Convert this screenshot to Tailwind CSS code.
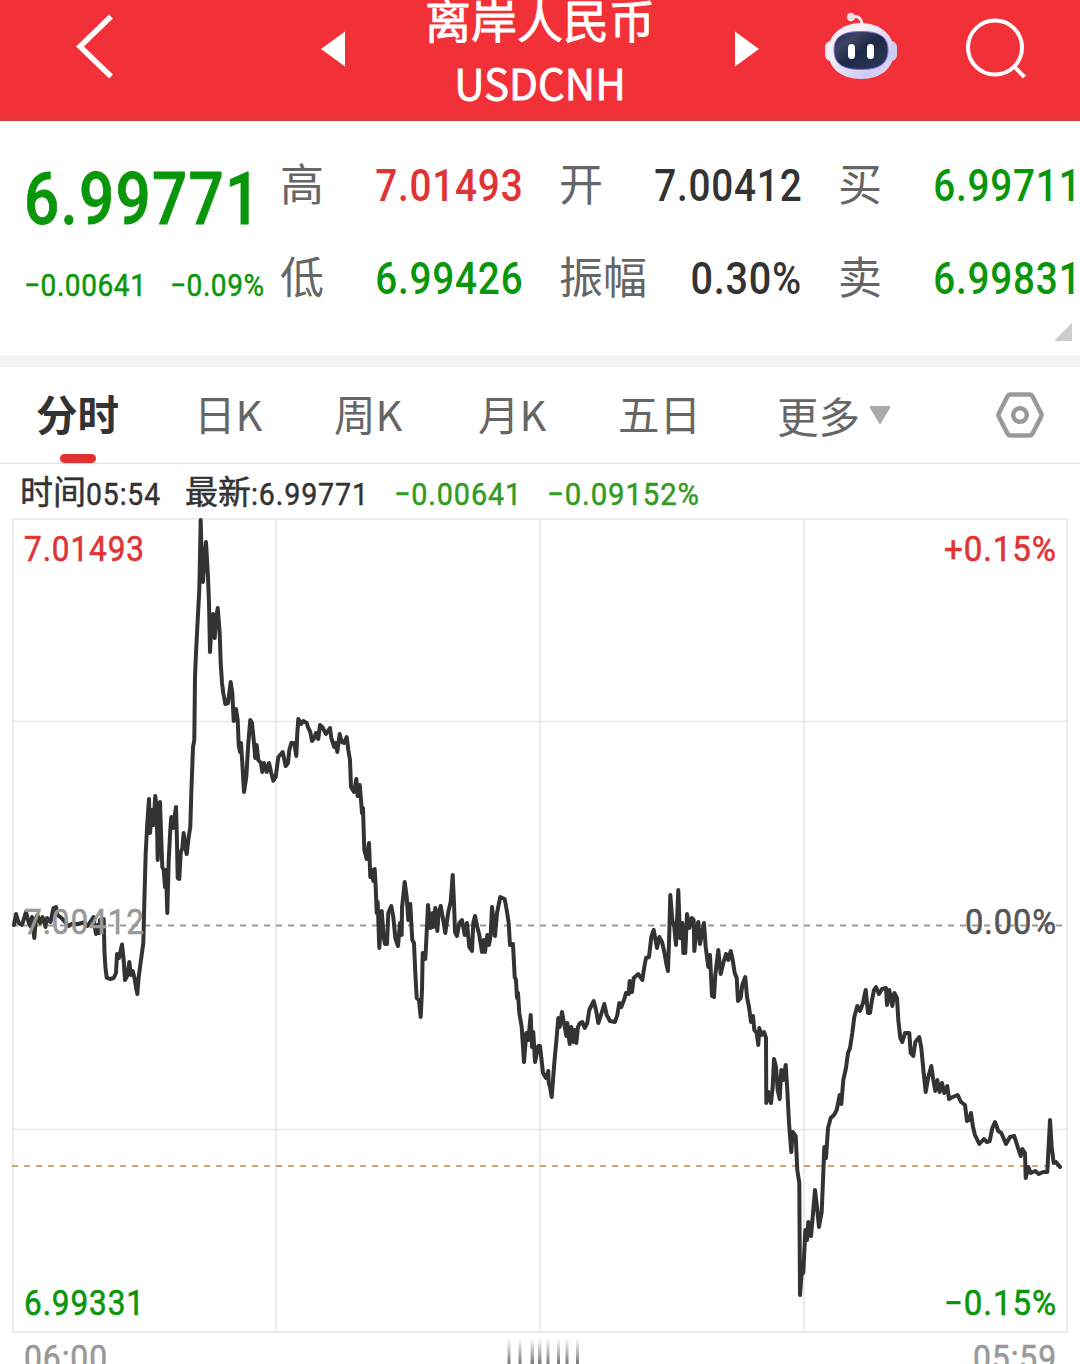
<!DOCTYPE html>
<html lang="zh-CN">
<head>
    <meta charset="UTF-8">
    <meta name="viewport" content="width=device-width, initial-scale=1.0">
    <title>离岸人民币 USDCNH</title>
    <script src="https://cdn.jsdelivr.net/npm/@tailwindcss/browser@4"></script>
</head>
<body class="bg-white w-[1080px] h-[1364px] overflow-hidden font-['Noto_Sans_CJK_SC',sans-serif] text-[#333]">

    <!-- Header -->
    <header class="relative flex h-[121px] bg-[#f23037] border-b-[5px] border-[#e83538] text-white">
        <svg class="w-[320px] h-[121px] shrink-0" viewBox="0 0 320 121" fill="none" stroke="#fff" stroke-width="5.5">
            <path d="M111 16.5 80 46.5l31 30" />
        </svg>
        <svg class="w-[26px] h-[121px] shrink-0" viewBox="320 0 26 121" fill="#fff">
            <path d="M321 49l24-17.500v35z" />
        </svg>
        <div class="w-[388px] shrink-0 flex flex-col items-center -mt-[5px] [-webkit-text-stroke:0.8px_#fff]">
            <h1 class="text-[46px] leading-[46px]">离岸人民币</h1>
            <div class="text-[42px] leading-[42px] mt-[20px]">USDCNH</div>
        </div>
        <svg class="w-[26px] h-[121px] shrink-0" viewBox="734 0 26 121" fill="#fff">
            <path d="M759 49l-24-17.500v35z" />
        </svg>
        <!-- Robot assistant -->
        <svg class="w-[180px] h-[121px] shrink-0" viewBox="760 0 180 121">
            <defs>
                <linearGradient id="head" x1="0" y1="0" x2="1" y2="1">
                    <stop offset="0.300" stop-color="#f8f1f8" />
                    <stop offset="0.750" stop-color="#cdcbf5" />
                    <stop offset="1" stop-color="#e9dcf3" />
                </linearGradient>
                <linearGradient id="visor" x1="0" y1="0" x2="1" y2="1">
                    <stop offset="0" stop-color="#252c55" />
                    <stop offset="0.250" stop-color="#3b4463" />
                    <stop offset="0.500" stop-color="#1f2947" />
                    <stop offset="1" stop-color="#2d3858" />
                </linearGradient>
            </defs>
            <path d="M851 17c6-1.500 10 0 11 7" fill="none" stroke="#f3e4ee" stroke-width="3" />
            <circle cx="851" cy="17" r="4.200" fill="#f1dfe8" />
            <rect x="825" y="41" width="12" height="20" rx="6" fill="#ece6f8" />
            <rect x="885" y="41" width="12" height="20" rx="6" fill="#cfcdf3" />
            <path d="M861 23c19 0 33 12 33 28 0 17-13 28-33 28s-33-11-33-28c0-16 14-28 33-28z" fill="url(#head)" />
            <path d="M861 31.500c18 0 27 5 27 18.500 0 14-9 19.500-27 19.500s-27-5.500-27-19.500c0-13.500 9-18.500 27-18.500z" fill="url(#visor)" stroke="#7d72dc" stroke-width="1" />
            <rect x="848" y="44" width="7" height="15" rx="3.500" fill="#fff" />
            <rect x="867" y="44" width="7" height="15" rx="3.500" fill="#fff" />
        </svg>
        <svg class="w-[140px] h-[121px] shrink-0" viewBox="940 0 140 121" fill="none" stroke="#fff" stroke-width="4">
            <circle cx="995" cy="47.500" r="27" />
            <path d="M1013.500 66l11 11" />
        </svg>
    </header>

    <!-- Quote summary -->
    <section class="relative flex h-[234px] whitespace-nowrap">
        <div class="w-[280px] shrink-0 pl-[24px] text-[#0a960a] font-[Roboto,sans-serif]">
            <div class="text-[73px] leading-[80px] mt-[38px] font-medium tracking-[0.02em] origin-left scale-x-[0.85] [-webkit-text-stroke:0.8px_#0a960a]">6.99771</div>
            <div class="flex text-[31.5px] leading-[40px] mt-[27px] tracking-[0.02em] [-webkit-text-stroke:0.5px_#0a960a]">
                <div class="w-[146px]"><span class="inline-block origin-left scale-x-[0.89]">−0.00641</span></div>
                <div><span class="inline-block origin-left scale-x-[0.89]">−0.09%</span></div>
            </div>
        </div>
        <div class="grid grid-cols-[279px_279px_279px] grid-rows-[93px_93px] shrink-0 pt-[19px] text-[44px] leading-[93px]">
            <div class="flex justify-between w-[243px]">
                <span class="text-[#666] -mt-[4px]">高</span>
                <span class="font-[Roboto,sans-serif] font-medium tracking-[0.02em] origin-right scale-x-[0.88] text-[#df3435]">7.01493</span>
            </div>
            <div class="flex justify-between w-[243px]">
                <span class="text-[#666] -mt-[4px]">开</span>
                <span class="font-[Roboto,sans-serif] font-medium tracking-[0.02em] origin-right scale-x-[0.88]">7.00412</span>
            </div>
            <div class="flex justify-between w-[243px]">
                <span class="text-[#666] -mt-[4px]">买</span>
                <span class="font-[Roboto,sans-serif] font-medium tracking-[0.02em] origin-right scale-x-[0.88] text-[#0a960a]">6.99711</span>
            </div>
            <div class="flex justify-between w-[243px]">
                <span class="text-[#666] -mt-[4px]">低</span>
                <span class="font-[Roboto,sans-serif] font-medium tracking-[0.02em] origin-right scale-x-[0.88] text-[#0a960a]">6.99426</span>
            </div>
            <div class="flex justify-between w-[243px]">
                <span class="text-[#666] -mt-[4px]">振幅</span>
                <span class="font-[Roboto,sans-serif] font-medium tracking-[0.02em] origin-right scale-x-[0.9]">0.30%</span>
            </div>
            <div class="flex justify-between w-[243px]">
                <span class="text-[#666] -mt-[4px]">卖</span>
                <span class="font-[Roboto,sans-serif] font-medium tracking-[0.02em] origin-right scale-x-[0.88] text-[#0a960a]">6.99831</span>
            </div>
        </div>
        <svg class="absolute right-[8px] bottom-[14px] w-[18px] h-[18px]" viewBox="0 0 18 18"><path d="M18 0v18H0z" fill="#ccc" /></svg>
    </section>

    <div class="h-[12px] bg-[#f4f4f4]"></div>

    <!-- Period tabs -->
    <nav class="relative flex h-[97px] border-b border-[#e2e2e2] pl-[36px] text-[41.5px] leading-[93px] text-[#666] whitespace-nowrap">
        <div class="w-[158px] font-bold text-[#333]">分时</div>
        <div class="w-[140px]">日K</div>
        <div class="w-[144px]">周K</div>
        <div class="w-[140px]">月K</div>
        <div class="w-[159px]">五日</div>
        <div class="w-[219px] flex items-center">更多
            <svg class="w-[22px] h-[19px] ml-[9px]" viewBox="0 0 22 19"><path d="M1.500 1h19L11 17z" fill="#aaa" stroke="#aaa" stroke-width="2" stroke-linejoin="round" /></svg>
        </div>
        <svg class="w-[48px] h-[96px]" viewBox="-24 -48 48 96" fill="none" stroke="#999" stroke-width="4.500">
            <path d="M-9.500-20.500h19q2 0 3 1.800L21-2q1 2 0 4L12.500 18.700q-1 1.800-3 1.800h-19q-2 0-3-1.800L-21 2q-1-2 0-4l8.500-16.700q1-1.800 3-1.800z" />
            <circle r="6.800" />
        </svg>
        <div class="absolute left-[60px] bottom-0 w-[36px] h-[9px] rounded-full bg-[#e33030]"></div>
    </nav>

    <!-- Chart: info line, grid, price line, axis labels -->
    <svg class="block w-[1080px] h-[900px]" viewBox="0 464 1080 900" font-family="Roboto, sans-serif" font-weight="400">
        <defs>
            <linearGradient id="fade" x1="0" y1="0" x2="0" y2="1">
                <stop offset="0" stop-color="#888" stop-opacity="0" />
                <stop offset="1" stop-color="#777" />
            </linearGradient>
        </defs>

        <g font-size="32" fill="#333" stroke="#333" stroke-width="0.500">
            <text x="20" y="504" font-size="33" font-family="'Noto Sans CJK SC', sans-serif">时间</text>
            <text x="86" y="505" letter-spacing="1" textLength="75" lengthAdjust="spacingAndGlyphs">05:54</text>
            <text x="185" y="504" font-size="33" font-family="'Noto Sans CJK SC', sans-serif">最新</text>
            <text x="251" y="505" letter-spacing="1" textLength="118" lengthAdjust="spacingAndGlyphs">:6.99771</text>
            <g fill="#339a22" stroke="#339a22" letter-spacing="1">
                <text x="394" y="505" textLength="128" lengthAdjust="spacingAndGlyphs">−0.00641</text>
                <text x="547" y="505" textLength="153" lengthAdjust="spacingAndGlyphs">−0.09152%</text>
            </g>
        </g>

        <g fill="none" stroke="#e6e6e6" stroke-width="1.500">
            <path d="M13 519H1067V1332H13zM276 519V1332M540 519V1332M804 519V1332M13 721.500H1067M13 1129.500H1067" />
        </g>
        <path d="M12 925.500H1062" stroke="#999" stroke-width="2" stroke-dasharray="6 6" />
        <path d="M12 1166H1062" stroke="#c9a873" stroke-width="2" stroke-dasharray="6 6" />

        <polyline fill="none" stroke="#333" stroke-width="4" stroke-linejoin="round" stroke-linecap="round" points="
            14,925 16,914 18.7,923 22,925 26,912 28.5,922 30.5,926 32,917 34.3,938 36,918 37.5,915 40,923 42.5,917 45.5,927 47,918 50.5,922
            53.5,908 56,907 57.5,915 61.5,918 65,922 68.5,926 71.5,924 78.5,924 83.5,922.5 87.5,926 93.5,917 94.8,927 96,934 97.7,925 99,933
            100,920 103.7,919 104.5,953 105.5,968 106.7,977.7 110,979 113.7,978 116,973 117,954 119,958 122,944.5 123.7,960 125,980
            127.5,975 129.3,962 131,975 132.7,971 134.5,978 136,987 137.3,994 138.7,977 140.3,965 143.3,943 144.3,903 145.7,853 147.3,823
            149,799 150,833 152,810 153.3,825 155.3,796 156.7,810 157.7,860 159,827 160,802 161.3,840 162.3,867 163.7,870 165,887 166,870
            167.3,913 168.7,860 170.3,830 171.3,817 173,828 176,807 177,843 177.7,878 179.3,879 180.7,853 182.3,848 183.7,833 185.3,847
            186.7,854 188.7,837 190.3,827 191.3,793 193,747 194.3,740 195,677 196,653 197.7,620 199.3,590 200.7,520 201.7,560 203,582
            204.3,560 206,542 208,577 209,603 210,652 211.7,620 213,614 214.7,638 216,620 217.7,608 219.7,633 220.7,663 222,683 223.3,693
            225.3,704 228,703 229.3,693 230.7,682 232.3,693 233.7,721 236,709 237.7,720 238.7,745 240,752 241,743 242.3,763 244,792
            246.3,777 248.3,743 250.3,720 252,723 253.7,740 255.3,758 256.7,745 258.3,760 261,763 262.3,772 264,763 266.7,772 269,763
            271,772 273.3,780.7 275.7,777 278.3,757 282.7,752 285.7,766 288,763 289.3,750 291.3,743 294.3,743 296.3,756 297.3,733 298.3,719
            301,724 303.3,721 306.7,723 308.3,728 310.3,732 312,741 314.3,738 316,733 318.3,739 320,725 322.3,727 326,734 330,728 331.3,738
            334.3,747 335.7,743 337.3,752 339.7,734 341.7,742 344,743 346.7,737 348.3,750 350,760 351,787 354,792 356.3,779 357.7,796
            359.7,785 361,800 362,813 363,808 364.3,850 366.7,859 369,843 370.3,877 372,870 373.3,881 374.7,869 375.7,887 376.7,913
            377.7,902 379.3,948 381.7,911 383.7,937 385,944 387,944 388.3,913 391.3,906 393.3,917 395.3,938 398,946 400,923 401.7,935
            402,908 404.7,882 406.7,897 408.3,920 410.3,904 411.7,930 412.3,940 414,943 415.3,973 416.7,998 419,1000 420.7,1017 422,990
            422.7,953 425.3,959 426.3,940 428,905 430.3,928 432.7,913 433.3,927 435.3,908 437.3,931 438.7,913 440.7,906 442.7,917
            445.3,933 448.3,912 450.7,902 452.7,875 454,903 455,932 457,936 459.3,923 462,920 464.7,935 467,923 469.3,947 472,951
            473.3,923 475,916 477.3,927 479.3,935 482,952 483.7,940 485,952 487.3,935 489,945 490.7,935 492,907 495,936 497,913 500.3,897
            504.7,899 506.7,910 508.7,923 510,945 513,944 514.7,977 516,980 517,998 518,993 519.3,1013 521.7,1027 524,1062 526.3,1033
            528.3,1040 530.7,1015 532,1047 533.3,1032 535,1062 538.3,1046 540,1046 543,1073 546,1078 548.3,1071 548.7,1083 550,1087
            551.7,1097 554.3,1063 556.7,1037 558.3,1018 559.7,1027 562,1012 564,1023 566.3,1036 567.3,1023 569.7,1044 571.3,1027
            573.3,1042 574.7,1030 576.3,1043 578,1027 580,1023 582.3,1022 584.7,1028 587.3,1023 589.3,1010 593.7,1001 596,1010 598.3,1023
            601,1015 604.3,1004 606.7,1015 610,1021 615,1022 617.3,1015 619.3,1003 621.3,1007 624,1000 626,993 628.7,994 629.7,981 632,992
            633.7,978 638.3,974 642.3,980 644.3,967 646,958 649,957 651.3,937 653.7,930 657,948 659.3,937 662,942 664.3,952 666,962
            668,971 669.3,933 670.3,895 672.3,920 674.3,927 676,945 678.3,890 680,938 682.3,923 683.3,953 685.3,953 687,914 689.3,928
            691.7,918 693.7,920 694.3,951 696.3,932 698.3,922 700,944 702,933 704,923 705.7,947 708.3,967 710,955 712,996 714,997
            715.3,975 718.3,950 720.7,974 723.3,963 726,954 728.3,960 730.7,951 732.7,960 734.7,973 736.7,978 738,1001 740.7,998
            742.3,985 745.3,977 747,997 749,1007 751,1022 753,1016 754.3,1030 756.7,1033 758.3,1045 759.3,1028 761.3,1035 764,1032
            766,1038 766.3,1103 768.3,1092 771,1103 772.7,1087 774,1059 776,1067 777.7,1090 779.7,1099 781.3,1070 783.3,1080 785.7,1065
            787.3,1090 789,1123 791.3,1152 792.7,1132 795.7,1136 797.3,1170 799.3,1183 800,1295 801.7,1273 803.3,1273 805.3,1230 807,1240
            808.3,1222 811,1236 812.7,1217 815,1190 817,1207 819,1227 821.7,1212 823.3,1173 824.3,1147 826,1158 828,1128 830.7,1118
            834,1115 836.7,1110 839.7,1095 841.3,1104 843.3,1080 846,1068 848,1053 850,1048 852.3,1033 854.3,1017 857.3,1006 860,1011
            863,1003 865.7,990 868,1013 870,1013 872,1000 874,990 876,987 879,994 882,989 886,988 887,1005 889.3,990 892.3,1006 894.3,993
            897,998 898.3,1020 900.3,1038 902.3,1042 905,1033 909.3,1033 910.7,1053 913.3,1056 915.3,1042 919.3,1037 921.3,1048
            923.7,1073 925.7,1092 928.3,1077 931.3,1066 933.3,1080 935.3,1091 937.3,1080 939.7,1092 942,1083 944.3,1093 947.3,1086
            949,1099 952.7,1097 957.7,1095 961,1102 965,1105 967,1121 969,1120 971,1113 973,1127 975,1135 979.3,1144 984,1139 986.7,1142
            989.7,1141 992.3,1128 995,1122 998.3,1131 1001.3,1133 1006,1144 1010,1137 1014.3,1136 1017.7,1147 1020.7,1156 1022.3,1149
            1025,1153 1025.7,1178 1028.3,1167 1030.7,1173 1035.3,1171 1038.7,1174 1043.3,1172 1047.3,1172 1050,1120 1051.7,1147
            1053.7,1163 1056,1162 1060,1167" />

        <g font-size="35" letter-spacing="1" stroke-width="0.600">
            <text x="24" y="561" fill="#df3435" stroke="#df3435" textLength="121" lengthAdjust="spacingAndGlyphs">7.01493</text>
            <text x="944" y="561" fill="#df3435" stroke="#df3435" textLength="113" lengthAdjust="spacingAndGlyphs">+0.15%</text>
            <text x="24" y="934" fill="#999" stroke="#999" textLength="121" lengthAdjust="spacingAndGlyphs">7.00412</text>
            <text x="965" y="934" fill="#555" stroke="#555" textLength="92" lengthAdjust="spacingAndGlyphs">0.00%</text>
            <text x="24" y="1315" fill="#0a960a" stroke="#0a960a" textLength="121" lengthAdjust="spacingAndGlyphs">6.99331</text>
            <text x="944" y="1315" fill="#0a960a" stroke="#0a960a" textLength="113" lengthAdjust="spacingAndGlyphs">−0.15%</text>
            <text x="24" y="1370" fill="#999" stroke="#999" textLength="84" lengthAdjust="spacingAndGlyphs">06:00</text>
            <text x="973" y="1370" fill="#999" stroke="#999" textLength="84" lengthAdjust="spacingAndGlyphs">05:59</text>
        </g>

        <!-- Drag handle -->
        <g fill="url(#fade)">
            <rect x="507.500" y="1338" width="3" height="26" />
            <rect x="518.500" y="1338" width="3" height="26" />
            <rect x="530.500" y="1338" width="3.500" height="26" />
            <rect x="538" y="1338" width="3.500" height="26" />
            <rect x="546.500" y="1338" width="3" height="26" />
            <rect x="557" y="1338" width="3" height="26" />
            <rect x="565.500" y="1338" width="3" height="26" />
            <rect x="576" y="1338" width="3" height="26" />
        </g>
    </svg>
</body>
</html>
